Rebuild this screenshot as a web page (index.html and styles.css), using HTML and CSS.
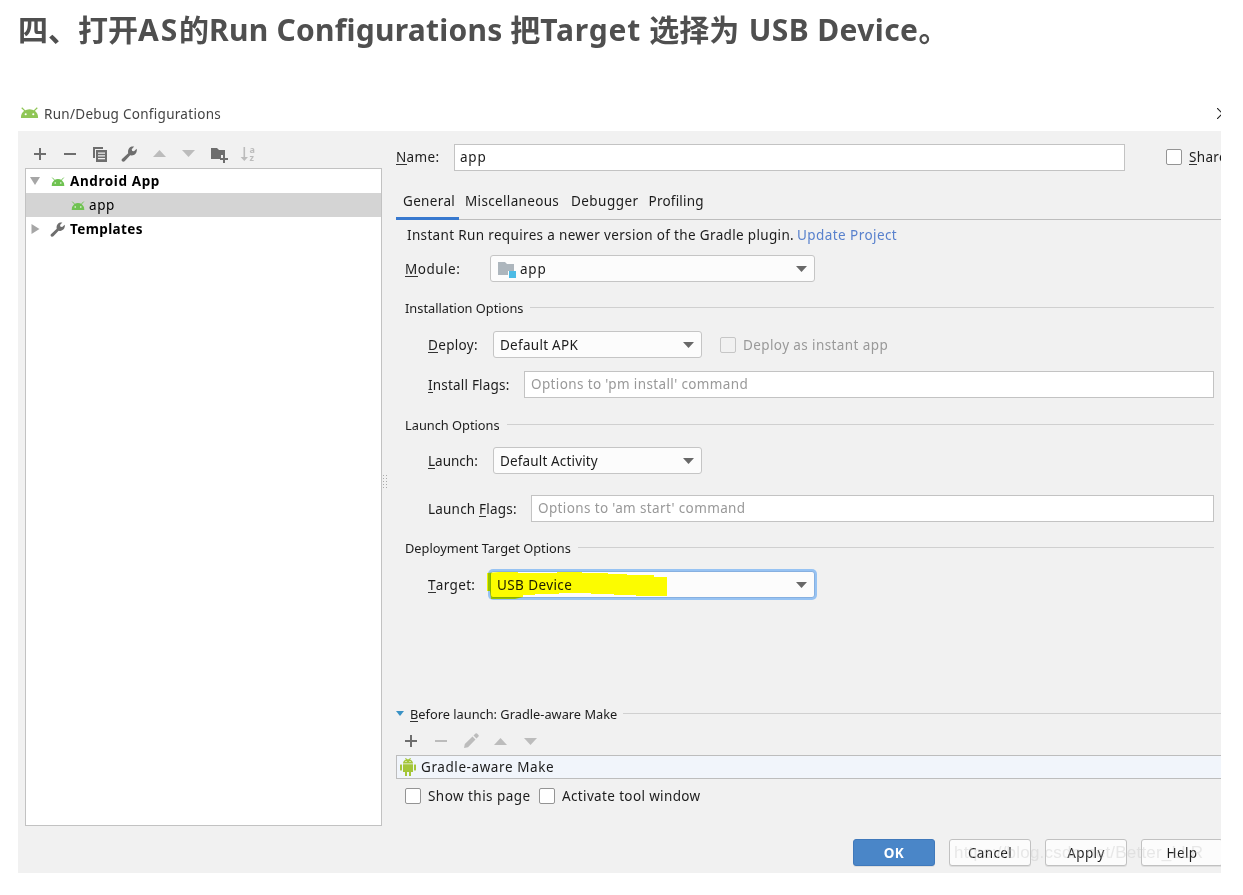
FILE: index.html
```html
<!DOCTYPE html>
<html lang="zh-CN">
<head>
<meta charset="utf-8">
<title>Run/Debug Configurations</title>
<link rel="stylesheet" href="styles.css">
</head>
<body>
<svg class="defs" aria-hidden="true">
  <symbol id="droid" viewBox="0 0 20 12" preserveAspectRatio="none"><path d="M1 12Q.8 7 4.500 4.200Q7 2.500 10 2.500T15.500 4.200Q19.200 7 19 12Z"/><path d="M1.800 .8L5.500 4.500M18.200 .8L14.500 4.500" stroke="currentColor" stroke-width="1.300"/><circle cx="6" cy="8" r="1.100" fill="#fff"/><circle cx="14" cy="8" r="1.100" fill="#fff"/></symbol>
  <symbol id="plus" viewBox="0 0 12 12"><path d="M5 0h2v5h5v2H7v5H5V7H0V5h5z"/></symbol>
  <symbol id="minus" viewBox="0 0 12 12"><path d="M0 5h12v2H0z"/></symbol>
  <symbol id="up" viewBox="0 0 14 8" preserveAspectRatio="none"><path d="M0 8L7 0l7 8z"/></symbol>
  <symbol id="down" viewBox="0 0 14 8" preserveAspectRatio="none"><path d="M0 0L7 8l7-8z"/></symbol>
  <symbol id="wrench" viewBox="0 0 16 16"><path d="M1 13L7.200 7.200C6.500 4.500 7.700 1.600 10.600.6L13.200 .4 10.700 3.200 11.200 5 13 5.300 15.700 2.800C16.400 6 14.500 9.600 10.600 9.500L9.200 9.200 3.600 15.300C2 16.500-.4 14.700 1 13Z"/></symbol>
</svg>

<h2 class="heading">四、打开<span class="h-as">AS</span>的<span class="h-run">Run Configurations</span> 把<span class="h-target">Target</span> 选择为 <span class="h-usb">USB Device</span>。</h2>

<main class="dialog">
  <header class="titlebar">
    <svg class="title-icon"><use href="#droid"/></svg>
    <span class="title-text">Run/Debug Configurations</span>
    <svg class="close" viewBox="0 0 11 11"><path d="M0 0l11 11M11 0L0 11"/></svg>
  </header>

  <div class="content">
    <aside class="sidebar">
      <div class="toolbar">
        <svg class="i12"><use href="#plus"/></svg>
        <svg class="i12"><use href="#minus"/></svg>
        <svg class="i16" viewBox="0 0 16 16"><path d="M1 1h10v2H3v9H1z"/><path fill-rule="evenodd" d="M4 4h11v12H4zM6 6.500v1.200h7V6.500zM6 9.300v1.200h7V9.300zM6 12v1.200h7V12z"/></svg>
        <svg class="i16"><use href="#wrench"/></svg>
        <svg class="arrow dim"><use href="#up"/></svg>
        <svg class="arrow dim"><use href="#down"/></svg>
        <svg class="i18" viewBox="0 0 18 16"><path d="M1 2h6l2 2h6v5h-4v4H1z"/><path d="M13 9h2v3h3v2h-3v3h-2v-3h-3v-2h3z"/></svg>
        <svg class="i18 dim" viewBox="0 0 18 16"><path d="M3.500 1h1.600v10H8l-3.700 4L.6 11h2.900z"/><text x="9.500" y="6.500">a</text><text x="9.500" y="15">z</text></svg>
      </div>
      <div class="tree">
        <div class="node"><svg class="twist-down"><use href="#down"/></svg><svg class="tree-droid root-icon"><use href="#droid"/></svg><b class="t-android">Android App</b></div>
        <div class="node selected"><svg class="tree-droid child-icon"><use href="#droid"/></svg><span class="t-app">app</span></div>
        <div class="node"><svg class="twist-right" viewBox="0 0 8 10"><path d="M0 0l8 5-8 5z"/></svg><svg class="tree-wrench"><use href="#wrench"/></svg><b class="t-templates">Templates</b></div>
      </div>
    </aside>
    <div class="splitter"><i></i></div>

    <section class="editor">
      <div class="row name-row"><label class="name-label"><u>N</u>ame:</label><div class="field name-field">app</div><i class="check"></i><span class="share"><u>S</u>hare</span></div>
      <nav class="tabs"><span class="tab active t-general">General</span><span class="tab t-misc">Miscellaneous</span><span class="tab t-debugger">Debugger</span><span class="tab t-profiling">Profiling</span></nav>
      <div class="message"><span class="t-message">Instant Run requires a newer version of the Gradle plugin.</span><a>Update Project</a></div>
      <div class="row module-row"><label class="module-label"><u>M</u>odule:</label><div class="combo module-combo"><svg class="module-icon" viewBox="0 0 18 17"><path fill="#adb6bd" d="M0 1h7l2 2h7v7h-6v4H0z"/><path fill="#4dbbe5" d="M11 10h7v7h-7z"/></svg><span class="t-module">app</span><svg class="caret"><use href="#down"/></svg></div></div>

      <h3 class="section s-install"><span>Installation Options</span></h3>
      <div class="row indent deploy-row"><label class="deploy-label"><u>D</u>eploy:</label><div class="combo small-combo"><span class="t-apk">Default APK</span><svg class="caret"><use href="#down"/></svg></div><i class="check disabled"></i><span class="instant">Deploy as instant app</span></div>
      <div class="row indent flags-row"><label class="flags-label"><u>I</u>nstall Flags:</label><div class="field hint">Options to 'pm install' command</div></div>

      <h3 class="section s-launch"><span>Launch Options</span></h3>
      <div class="row indent launch-row"><label class="deploy-label t-launch"><u>L</u>aunch:</label><div class="combo small-combo"><span class="t-activity">Default Activity</span><svg class="caret"><use href="#down"/></svg></div></div>
      <div class="row indent lflags-row"><label class="lflags-label">Launch <u>F</u>lags:</label><div class="field hint">Options to 'am start' command</div></div>

      <h3 class="section s-target"><span>Deployment Target Options</span></h3>
      <div class="row indent target-row"><label class="target-label"><u>T</u>arget:</label><div class="combo target-combo"><span class="t-usb">USB Device</span><svg class="caret"><use href="#down"/></svg><svg class="marker" viewBox="0 0 181 29"><path d="M0 3L12 2H31V3H70V2H95V3H121V4H140V5H167V7H180V26H149V25H127V24H104V23H72V24H48V25H36V27L28 29H4L3 21H0Z"/></svg></div></div>

      <h3 class="section before"><svg class="fold"><use href="#down"/></svg><span><u>B</u>efore launch: Gradle-aware Make</span></h3>
      <div class="toolbar task-tools">
        <svg class="i12"><use href="#plus"/></svg>
        <svg class="i12 dim"><use href="#minus"/></svg>
        <svg class="i16 dim" viewBox="0 0 16 16"><path d="M1 15l.8-4L9.500 3.500l3 3L5 14.200zM10.500 2.500L12.500.5q.8-.6 1.500 0l1.500 1.500q.6.800 0 1.500l-2 2z"/></svg>
        <svg class="arrow dim"><use href="#up"/></svg>
        <svg class="arrow dim"><use href="#down"/></svg>
      </div>
      <div class="task"><svg class="robot" viewBox="0 0 16 18"><path d="M3 5.500C3 3.500 4.500 2 6 1.500L5 0l1 0 1 1.200h2L10 0h1l-1 1.500c1.500.5 3 2 3 4zM3 6.300h10V14h-2v4H9v-4H7v4H5v-4H3zM0 7q1-1.500 2 0v5q-1 1.500-2 0zM14 7q1-1.500 2 0v5q-1 1.500-2 0z"/><path fill="#fff" d="M5.500 3h1v1h-1zM9.500 3h1v1h-1z"/></svg><span>Gradle-aware Make</span></div>
      <div class="options"><i class="check"></i><span class="t-show">Show this page</span><i class="check"></i><span class="t-activate">Activate tool window</span></div>
    </section>

    <footer class="buttons"><button class="ok">OK</button><button>Cancel</button><button>Apply</button><button>Help</button><span class="watermark">https://blog.csdn.net/Better_LLR</span></footer>
  </div>
</main>
</body>
</html>
```
FILE: styles.css
```css
* { box-sizing: border-box; }
body { margin: 0; width: 1243px; height: 895px; overflow: hidden; background: #fff; color: #1c1c1c; font: 13.5px/20px "Noto Sans", "Noto Sans CJK SC", sans-serif; letter-spacing: .34px; }
svg { display: block; flex: none; fill: currentColor; }
.defs { position: absolute; width: 0; height: 0; }
span, label, b { white-space: nowrap; }
u { text-decoration: none; border-bottom: 1px solid #333; display: inline-block; line-height: 13px; }
.heading { margin: 0; height: 96px; padding: 10px 0 0 18px; font: bold 30px/40px "Noto Sans", "Noto Sans CJK SC", sans-serif; letter-spacing: 0; color: #4f4f4f; white-space: nowrap; }
.h-as { letter-spacing: 1.9px; }
.h-run { letter-spacing: .24px; }
.h-target { letter-spacing: .8px; margin-right: .5px; }
.h-usb { letter-spacing: .4px; margin-left: 1.5px; }

.dialog { width: 1203px; height: 777px; margin-left: 18px; overflow: hidden; }
.titlebar { height: 35px; display: flex; align-items: center; color: #444; }
.title-icon { width: 19px; height: 11px; margin: -2px 5px 0 2px; color: #8fc655; }
.title-text { letter-spacing: .29px; }
.close { width: 11px; height: 11px; margin-left: auto; margin-right: -7px; stroke: #222; stroke-width: 1.2; }
.content { height: 742px; background: #f1f1f1; display: grid; grid-template-columns: 364px 14px 825px; grid-template-rows: 695px 47px; }

.sidebar { padding: 8px 0 0 7px; display: flex; flex-direction: column; }
.toolbar { height: 29px; display: flex; align-items: center; gap: 17.800px; padding-left: 9px; color: #6e6e6e; }
.toolbar .i12 { width: 12px; height: 12px; }
.toolbar .i16 { width: 16px; height: 16px; margin: 0 -2px; }
.toolbar .i18 { width: 18px; height: 16px; margin: 0 -3px; overflow: visible; }
.toolbar .arrow { width: 13px; height: 7px; margin: 0 -.5px; }
.toolbar text { font: bold 9px "Noto Sans", sans-serif; }
.dim { color: #bcbcbc; }
.tree { height: 658px; border: 1px solid #c2c2c2; background: #fff; color: #000; }
.node { height: 24px; display: flex; align-items: center; }
.selected { background: #d4d4d4; }
.tree-droid { width: 14px; height: 9px; color: #6fc251; }
.twist-down { width: 10px; height: 8px; margin-left: 4px; color: #a6a6a6; }
.root-icon { margin: 0 5px 0 11px; }
.child-icon { margin: 0 4px 0 45px; }
.t-android { letter-spacing: .6px; }
.t-templates { letter-spacing: .4px; }
.t-app { letter-spacing: .6px; }
.twist-right { width: 9px; height: 10px; margin-left: 5px; color: #a6a6a6; }
.tree-wrench { width: 15px; height: 15px; margin: 0 5px 0 10px; color: #6e6e6e; }
.splitter { padding: 343px 0 0; }
.splitter i { display: block; width: 5px; height: 16px; background: radial-gradient(circle, #aaa 0.7px, transparent 0.8px) 0 0 / 3px 3px; }

.editor { display: flex; flex-direction: column; padding-top: 13px; min-width: 0; }
.row { display: flex; align-items: center; height: 27px; flex: none; }
.field { height: 27px; border: 1px solid #c3c3c3; background: #fff; padding: 2px 5px; line-height: 21px; white-space: nowrap; }
.name-label { flex: none; width: 58px; margin-top: -1px; }
.name-field { flex: none; width: 671px; letter-spacing: .8px; }
.check { flex: none; width: 16px; height: 16px; border: 1px solid #949494; border-radius: 2px; background: #fff; }
.name-row .check { margin: -2px 7px 0 41px; }
.share { margin-top: -1px; }
.tabs { height: 49px; flex: none; border-bottom: 1px solid #bdbdbd; padding-top: 18px; display: flex; }
.tab { height: 31px; padding-top: 2px; line-height: 20px; }
.active { width: 63px; padding-left: 7px; border-bottom: 3px solid #3879cf; margin-right: 6px; }
.t-misc { width: 106px; }
.t-debugger { width: 77.500px; letter-spacing: .45px; }
.t-profiling { letter-spacing: .22px; }
.message { height: 35px; flex: none; padding: 5px 0 0 11px; display: flex; }
.t-message { width: 390px; }
.message a { color: #5881cd; letter-spacing: .43px; }
.module-row { padding-left: 9px; }
.module-label { width: 85px; letter-spacing: .5px; }
.combo { height: 27px; border: 1px solid #c5c5c5; border-radius: 3px; background: #fcfcfc; display: flex; align-items: center; padding: 0 7px 0 6px; color: #1c1c1c; }
.caret { width: 11px; height: 6px; margin-left: auto; color: #686868; }
.module-combo { width: 325px; }
.module-icon { width: 18px; height: 17px; margin: 2px 4px 0 1px; }
.t-module { letter-spacing: .8px; }
.section { margin: 0; height: 20px; flex: none; display: flex; align-items: center; gap: 7px; font-weight: 400; font-size: 12.8px; letter-spacing: 0; padding: 0 7px 0 9px; }
.section::after { content: ""; height: 1px; flex: 1; margin-top: -2px; background: #d0d0d0; }
.s-install { margin-top: 16px; }
.indent { padding: 0 7px 0 32px; }
.deploy-row { margin-top: 13px; }
.deploy-label { width: 65px; }
.t-launch { letter-spacing: 0; }
.t-apk { letter-spacing: .27px; }
.t-activity { letter-spacing: .15px; }
.small-combo { width: 209px; }
.disabled { margin: 0 7px 0 18px; border-color: #c6c6c6; background: #f1f1f1; }
.instant { color: #999; letter-spacing: .4px; }
.flags-row { margin-top: 13px; }
.flags-label { width: 96px; letter-spacing: .2px; }
.hint { flex: 1; color: #999; padding-left: 6px; letter-spacing: .37px; }
.s-launch { margin-top: 17px; }
.launch-row { margin-top: 12px; }
.lflags-row { margin-top: 21px; }
.lflags-label { width: 103px; letter-spacing: .2px; }
.s-target { margin-top: 16px; }
.target-row { margin-top: 13px; }
.target-label { width: 62px; }
.t-usb { letter-spacing: .4px; }
.target-combo { width: 325px; position: relative; border-color: #87b0e0; box-shadow: 0 0 0 2px #97c3f3; }
.marker { position: absolute; left: -4px; top: -2px; width: 181px; height: 29px; fill: #ff0; mix-blend-mode: multiply; }
.before { margin-top: 106px; padding: 0; gap: 6px; }
.fold { width: 8px; height: 5px; margin-top: -2px; color: #3992c5; }
.task-tools { height: 31px; padding: 3px 0 0 9px; }
.task { height: 24px; flex: none; border: 1px solid #bdbdbd; border-right: 0; background: #f1f5fb; display: flex; align-items: center; gap: 5px; padding-left: 3px; letter-spacing: .58px; }
.robot { width: 16px; height: 18px; color: #a4c639; }
.options { height: 34px; display: flex; align-items: center; padding-left: 9px; }
.t-show { width: 118px; padding-left: 7px; letter-spacing: .45px; }
.t-activate { padding-left: 7px; letter-spacing: .36px; }

.buttons { grid-column: 1 / -1; position: relative; padding: 13px 0 0 835px; display: flex; gap: 14px; }
.buttons button { flex: none; width: 82px; height: 27px; padding: 0; border: 1px solid #c1c1c1; border-radius: 3px; background: #fcfcfc; color: #1c1c1c; font: inherit; letter-spacing: .34px; line-height: 20px; box-shadow: 0 1px #dedede; }
.buttons .ok { color: #fff; font-weight: bold; background: #4a86c8; border-color: #4079bb; }
.watermark { position: absolute; left: 936px; top: 17px; font: 17px/20px "Liberation Sans", Arial, sans-serif; letter-spacing: .2px; color: rgba(200,200,200,.4); }
```
